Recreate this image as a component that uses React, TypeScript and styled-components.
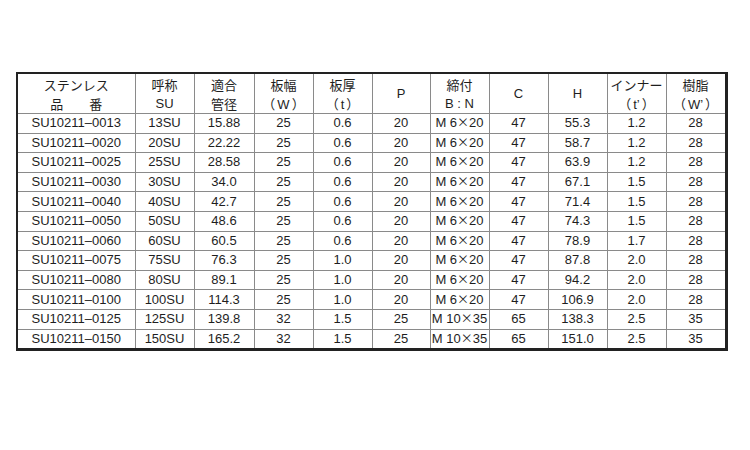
import React from 'react'
import styled, { createGlobalStyle } from 'styled-components'

const GlobalStyle = createGlobalStyle`
  html, body {
    margin: 0;
    padding: 0;
    background: #fff;
  }
  body {
    font-family: 'Liberation Sans', Arial, 'Noto Sans CJK JP', sans-serif;
    color: #1e1e1e;
  }
`

const Page = styled.div`
  width: 750px;
  height: 450px;
  padding: 72px 0 0 16px;
  box-sizing: border-box;
`

const Table = styled.table`
  border-collapse: collapse;
  table-layout: fixed;
  width: 709px;
  border-top: 2px solid #222;
  border-left: 2px solid #222;
  border-right: 3px solid #222;
  border-bottom: 3px solid #222;
  font-size: 13px;
`

const Col = styled.col<{ $w: number }>`
  width: ${(p) => p.$w}px;
`

const HeadCell = styled.th`
  font-weight: normal;
  height: 39px;
  padding: 0;
  border: 1px solid #8a8a8a;
  text-align: center;
  vertical-align: middle;
  line-height: 19px;
`

const Line = styled.div`
  height: 19px;
  line-height: 19px;
  overflow: hidden;
`

const Jp = styled.span`
  font-family: 'Noto Sans CJK JP', sans-serif;
  font-size: 13px;
`

const Latin = styled.span<{ $pad?: boolean }>`
  margin: 0 ${(p) => (p.$pad ? 2 : 0)}px;
`

const Cell = styled.td`
  height: 18.6px;
  padding: 0;
  border: 1px solid #8a8a8a;
  text-align: center;
  vertical-align: middle;
  line-height: 18px;
  white-space: nowrap;
`

const Times = styled.span`
  font-family: 'Noto Sans CJK JP', sans-serif;
  font-size: 12px;
  line-height: 0;
`

const widths = [118, 59, 60, 59, 59, 58, 59, 59, 59, 59, 60]

// each header line is a list of [text, isJapanese]
type Part = [string, boolean]
const headers: Part[][][] = [
  [[['ステンレス', true]], [['品\u3000\u3000番', true]]],
  [[['呼称', true]], [['SU', false]]],
  [[['適合', true]], [['管径', true]]],
  [[['板幅', true]], [['（', true], ['W', false], ['）', true]]],
  [[['板厚', true]], [['（', true], ['t', false], ['）', true]]],
  [[['P', false]]],
  [[['締付', true]], [['B : N', false]]],
  [[['C', false]]],
  [[['H', false]]],
  [[['インナー', true]], [['（', true], ['t’', false], ['）', true]]],
  [[['樹脂', true]], [['（', true], ['W’', false], ['）', true]]],
]

const rows: string[][] = [
  ['0013', '13SU', '15.88', '25', '0.6', '20', 'M 6×20', '47', '55.3', '1.2', '28'],
  ['0020', '20SU', '22.22', '25', '0.6', '20', 'M 6×20', '47', '58.7', '1.2', '28'],
  ['0025', '25SU', '28.58', '25', '0.6', '20', 'M 6×20', '47', '63.9', '1.2', '28'],
  ['0030', '30SU', '34.0', '25', '0.6', '20', 'M 6×20', '47', '67.1', '1.5', '28'],
  ['0040', '40SU', '42.7', '25', '0.6', '20', 'M 6×20', '47', '71.4', '1.5', '28'],
  ['0050', '50SU', '48.6', '25', '0.6', '20', 'M 6×20', '47', '74.3', '1.5', '28'],
  ['0060', '60SU', '60.5', '25', '0.6', '20', 'M 6×20', '47', '78.9', '1.7', '28'],
  ['0075', '75SU', '76.3', '25', '1.0', '20', 'M 6×20', '47', '87.8', '2.0', '28'],
  ['0080', '80SU', '89.1', '25', '1.0', '20', 'M 6×20', '47', '94.2', '2.0', '28'],
  ['0100', '100SU', '114.3', '25', '1.0', '20', 'M 6×20', '47', '106.9', '2.0', '28'],
  ['0125', '125SU', '139.8', '32', '1.5', '25', 'M 10×35', '65', '138.3', '2.5', '35'],
  ['0150', '150SU', '165.2', '32', '1.5', '25', 'M 10×35', '65', '151.0', '2.5', '35'],
]

function renderValue(v: string) {
  if (!v.includes('×')) return v
  const [a, b] = v.split('×')
  return (
    <>
      {a}
      <Times>×</Times>
      {b}
    </>
  )
}

export default function App() {
  return (
    <>
      <GlobalStyle />
      <Page>
        <Table>
          <colgroup>
            {widths.map((w, i) => (
              <Col key={i} $w={w} />
            ))}
          </colgroup>
          <thead>
            <tr>
              {headers.map((lines, i) => (
                <HeadCell key={i}>
                  {lines.map((parts, j) => (
                    <Line key={j}>
                      {parts.map(([t, jp], k) =>
                        jp ? (
                          <Jp key={k}>{t}</Jp>
                        ) : (
                          <Latin key={k} $pad={parts.length > 1}>
                            {t}
                          </Latin>
                        )
                      )}
                    </Line>
                  ))}
                </HeadCell>
              ))}
            </tr>
          </thead>
          <tbody>
            {rows.map((r) => (
              <tr key={r[0]}>
                <Cell>SU10211–{r[0]}</Cell>
                {r.slice(1).map((v, i) => (
                  <Cell key={i}>{renderValue(v)}</Cell>
                ))}
              </tr>
            ))}
          </tbody>
        </Table>
      </Page>
    </>
  )
}
